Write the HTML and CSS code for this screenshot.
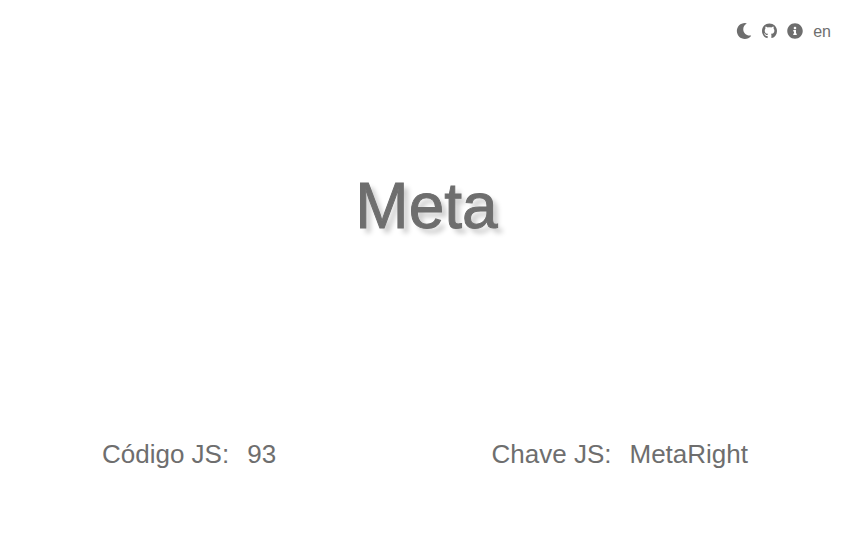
FILE: index.html
```html
<!DOCTYPE html>
<html lang="pt">
<head>
<meta charset="utf-8">
<title>Meta</title>
<link rel="stylesheet" href="styles.css">
</head>
<body>
<header class="toolbar">
<button class="tool" type="button" aria-label="Tema"><svg viewBox="0 0 512 512"><path d="M283.211 512c78.962 0 151.079-35.925 198.857-94.792 7.068-8.708-.639-21.43-11.562-19.35-124.203 23.654-238.262-71.576-238.262-196.954 0-72.222 38.662-138.635 101.498-174.394 9.686-5.512 7.25-20.197-3.756-22.23A258.156 258.156 0 0 0 283.211 0c-141.309 0-256 114.511-256 256 0 141.309 114.511 256 256 256z"/></svg></button>
<a class="tool github" href="#github" aria-label="GitHub"><svg viewBox="0 0 496 512"><path d="M244.8 8C106.1 8 0 113.3 0 252c0 110.9 69.8 205.8 169.5 239.2 12.8 2.3 17.3-5.6 17.3-12.1 0-6.2-.3-40.4-.3-61.4 0 0-70 15-84.7-29.8 0 0-11.4-29.1-27.8-36.6 0 0-22.9-15.7 1.6-15.4 0 0 24.9 2 38.6 25.8 21.9 38.6 58.6 27.5 72.9 20.9 2.3-16 8.8-27.1 16-33.7-55.9-6.2-112.3-14.3-112.3-110.5 0-27.5 7.6-41.3 23.6-58.9-2.6-6.5-11.1-33.3 2.6-67.9 20.9-6.5 69 27 69 27 20-5.6 41.5-8.5 62.8-8.5s42.8 2.9 62.8 8.5c0 0 48.1-33.6 69-27 13.7 34.7 5.2 61.4 2.6 67.9 16 17.7 25.8 31.5 25.8 58.9 0 96.5-58.9 104.2-114.8 110.5 9.2 7.9 17 22.9 17 46.4 0 33.7-.3 75.4-.3 83.6 0 6.5 4.6 14.4 17.3 12.1C428.2 457.8 496 362.9 496 252 496 113.3 383.5 8 244.8 8z"/></svg></a>
<button class="tool" type="button" aria-label="Info"><svg viewBox="0 0 512 512"><path d="M256 8C119.043 8 8 119.083 8 256c0 136.997 111.043 248 248 248s248-111.003 248-248C504 119.083 392.957 8 256 8zm0 110c23.196 0 42 18.804 42 42s-18.804 42-42 42-42-18.804-42-42 18.804-42 42-42zm56 254c0 6.627-5.373 12-12 12h-88c-6.627 0-12-5.373-12-12v-24c0-6.627 5.373-12 12-12h12v-64h-12c-6.627 0-12-5.373-12-12v-24c0-6.627 5.373-12 12-12h64c6.627 0 12 5.373 12 12v100h12c6.627 0 12 5.373 12 12v24z"/></svg></button>
<button class="tool language" type="button">en</button>
</header>
<main class="content">
<h1 class="key">Meta</h1>
<section class="details">
<p class="detail"><span>Código JS:</span><span>93</span></p>
<p class="detail"><span>Chave JS:</span><span>MetaRight</span></p>
</section>
</main>
</body>
</html>
```
FILE: styles.css
```css
* { box-sizing: border-box; }
body {
  margin: 0;
  min-height: 100vh;
  display: flex;
  flex-direction: column;
  background: #fff;
  color: #6e6e6e;
  font-family: "Liberation Sans", Arial, sans-serif;
}
.toolbar {
  display: flex;
  justify-content: flex-end;
  align-items: flex-start;
  gap: 10px;
  height: 40px;
  padding: 22px 22px 0;
}
.tool {
  display: flex;
  align-items: center;
  height: 18px;
  padding: 0;
  border: 0;
  background: none;
  color: inherit;
  font: 16px/20px "Liberation Sans", Arial, sans-serif;
  cursor: pointer;
}
.language { height: 20px; }
.tool svg {
  width: 16px;
  height: 16px;
  fill: currentColor;
}
.github svg { width: 15px; }
.content {
  flex: 1;
  display: flex;
  flex-direction: column;
}
.key {
  flex: 1;
  display: flex;
  align-items: center;
  justify-content: center;
  margin: 0;
  padding-bottom: 66px;
  font-size: 64px;
  font-weight: 400;
  line-height: 72px;
  text-shadow: 5px 5px 5px #ccc;
  -webkit-text-stroke: 1px currentColor;
}
.details {
  display: flex;
  justify-content: space-between;
  padding: 0 105px 86px 102px;
}
.detail {
  display: flex;
  gap: 18px;
  margin: 0;
  font-size: 26px;
  line-height: 32px;
}
```
